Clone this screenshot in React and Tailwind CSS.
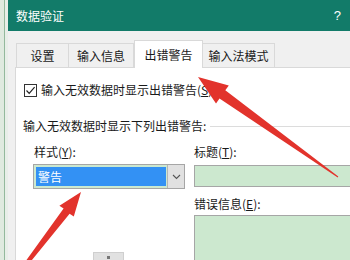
const font = { fontFamily: '"Noto Sans CJK SC", "Liberation Sans", sans-serif' };

function Tab({ label, active, w }) {
  if (active) {
    return (
      <div
        className={`${w} h-[28px] -mt-[3px] -mb-px bg-white border border-b-0 border-[#d9d9d9] flex items-center justify-center relative z-10 text-[12px] text-[#1a1a1a]`}
      >
        {label}
      </div>
    );
  }
  return (
    <div
      className={`${w} h-[24px] border border-b-0 border-[#d9d9d9] -ml-px first:ml-0 flex items-center justify-center text-[12px] text-[#1a1a1a] bg-[#f0f0f0]`}
    >
      {label}
    </div>
  );
}

function Arrows() {
  return (
    <svg className="absolute inset-0 pointer-events-none" width="350" height="260" viewBox="0 0 350 260">
      <polygon
        points="198,77 228.8,85.4 225.3,90.3 338.3,176.5 337.7,177.5 219.5,98.5 216,103.4"
        fill="#e2332c"
      />
      <polygon
        points="81,192 73.8,216.6 69.6,213.8 23,271 20,269 63.6,208.6 59.4,205.8"
        fill="#e2332c"
      />
    </svg>
  );
}

export default function App() {
  return (
    <div className="w-[350px] h-[260px] overflow-hidden relative flex bg-white" style={font}>
      {/* sheet edge behind the dialog */}
      <div className="flex shrink-0">
        <div className="w-[4px] bg-[#dfeadf]" />
        <div className="w-px bg-[#93b99c]" />
        <div className="w-[3px] bg-[#e8eee8]" />
      </div>

      <div className="flex-1 flex flex-col min-w-0">
        {/* title bar */}
        <div className="h-[31px] bg-[#127b69] flex items-center justify-between pl-[8px] pr-[9px] text-white text-[12px] shrink-0">
          <span>数据验证</span>
          <span className="text-[13px]" style={{ fontFamily: '"Liberation Sans", sans-serif' }}>?</span>
        </div>

        <div className="flex-1 bg-[#f0f0f0] pl-[7px] flex flex-col">
          {/* tabs */}
          <div className="flex items-end mt-[12px] ml-px">
            <Tab label="设置" w="w-[53px]" />
            <Tab label="输入信息" w="w-[66px]" />
            <Tab label="出错警告" w="w-[69px]" active />
            <Tab label="输入法模式" w="w-[73px]" />
          </div>

          {/* content panel */}
          <div className="flex-1 bg-white border-t border-l border-[#d9d9d9] pl-[7px] text-[12px] text-[#1a1a1a]">
            <div className="flex items-center h-[16px] mt-[14px] ml-px">
              <div className="w-[13px] h-[13px] border border-[#333] flex items-center justify-center">
                <svg width="11" height="11" viewBox="0 0 11 11">
                  <path d="M1.5 5.5 L4.2 8.3 L9.6 2.2" fill="none" stroke="#222" strokeWidth="1.2" />
                </svg>
              </div>
              <span className="ml-[4px]">
                输入无效数据时显示出错警告(<span className="underline">S</span>)
              </span>
            </div>

            <div className="flex items-center h-[16px] mt-[20px]">
              <span className="shrink-0">输入无效数据时显示下列出错警告:</span>
              <div className="flex-1 h-px bg-[#dcdcdc] ml-[4px]" />
            </div>

            <div className="flex mt-[10px]">
              <div className="w-[171px] shrink-0 flex flex-col">
                <div className="h-[16px] flex items-center ml-[11px]">
                  样式(<span className="underline">Y</span>):
                </div>
                <div className="ml-[10px] mt-[4px] w-[152px] h-[25px] border border-[#a6a6a6] bg-[#cce8cf] flex">
                  <div className="flex-1 p-[2px] pr-px">
                    <div className="h-full bg-[#3391f4] text-white flex items-center pl-[2px]">警告</div>
                  </div>
                  <div className="w-[17px] bg-[#e1e1e1] border-l border-[#b5b5b5] flex items-center justify-center">
                    <svg width="9" height="6" viewBox="0 0 9 6">
                      <path d="M1 1 L4.5 4.5 L8 1" fill="none" stroke="#555" strokeWidth="1.1" />
                    </svg>
                  </div>
                </div>
                <div className="ml-[70px] mt-[63px] w-[31px] h-[10px] bg-[#e1e1e1] border border-[#cfcfcf] flex justify-center">
                  <div className="w-[3px] h-[3px] bg-[#777] mt-[3px]" />
                </div>
              </div>

              <div className="flex-1 flex flex-col">
                <div className="h-[16px] flex items-center">
                  标题(<span className="underline">T</span>):
                </div>
                <div className="mt-[5px] h-[22px] border border-[#a6a6a6] border-r-0 bg-[#cce8cf]" />
                <div className="h-[16px] flex items-center mt-[9px]">
                  错误信息(<span className="underline">E</span>):
                </div>
                <div className="mt-[3px] h-[60px] border border-[#a6a6a6] border-r-0 bg-[#cce8cf]" />
              </div>
            </div>
          </div>
        </div>
      </div>

      <Arrows />
    </div>
  );
}
